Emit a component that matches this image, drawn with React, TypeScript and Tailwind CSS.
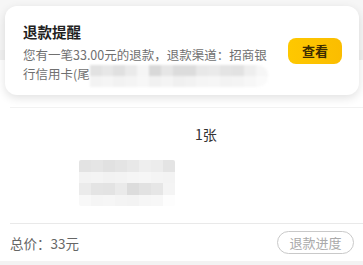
import React from "react";

const blurTop = ["#e2e2e2", "#e7e7e7", "#e0e0e0", "#eaeaea", "#f5f5f5", "#d8d8d8", "#e6e6e6", "#dcdcdc", "#dcdcdc", "#e8e8e8", "#eaeaea", "#e4e4e4", "#e2e2e2", "#eeeeee", "#f6f6f6"];
const blurBot = ["#f3f3f3", "#f5f5f5", "#f2f2f2", "#f4f4f4", "#f7f7f7", "#f1f1f1", "#f4f4f4", "#f0f0f0", "#f2f2f2", "#f5f5f5", "#f6f6f6", "#f3f3f3", "#f4f4f4", "#f7f7f7", "#fafafa"];

const gridRows = [
  ["#e3e3e3", "#e5e5e5", "#e1e1e1", "#e4e4e4", "#e8e8e8", "#eeeeee", "#ececec", "#e4e4e4"],
  ["#f3f3f3", "#f4f4f4", "#f2f2f2", "#f3f3f3", "#f5f5f5", "#f6f6f6", "#f4f4f4", "#f3f3f3"],
  ["#ebebeb", "#e4e4e4", "#e3e3e3", "#eaeaea", "#dcdcdc", "#e2e2e2", "#e6e6e6", "#f4f4f4"],
  ["#f8f8f8", "#f5f5f5", "#f6f6f6", "#f4f4f4", "#f3f3f3", "#f6f6f6", "#f7f7f7", "#fdfdfd"],
];

export default function App() {
  return (
    <div className="relative w-[363px] h-[265px] bg-white overflow-hidden font-['Noto_Sans_CJK_SC','Noto_Sans',sans-serif]">
      {/* underlying page */}
      <div className="flex flex-col h-full">
        <div className="h-[50px] bg-[#f6f6f6]" />
        <div className="h-[10px] bg-[#f1f1f1]" />
        <div className="h-[47px] bg-white" />
        <div className="ml-[10px] border-t border-[#f2f2f2]" />
        <div className="flex flex-col h-[115px]">
          <div className="pl-[195px] pt-[16px] text-[14px] leading-[20px] text-[#333]">1张</div>
          <div className="ml-[79px] mt-[16px] w-[96px] grid grid-cols-8 rounded-[2px] overflow-hidden blur-[0.6px]">
            {gridRows.flat().map((c, i) => (
              <div key={i} className="h-[11.5px]" style={{ backgroundColor: c }} />
            ))}
          </div>
        </div>
        <div className="ml-[10px] border-t border-[#e9e9e9]" />
        <div className="flex items-center justify-between h-[37px] pl-[10px] pr-[9px]">
          <span className="text-[13.5px] text-[#666] leading-[20px]">总价：33元</span>
          <span className="flex items-center justify-center w-[77px] h-[23px] rounded-full border border-[#c9c9c9] text-[13px] text-[#aaa]">退款进度</span>
        </div>
        <div className="flex-1 bg-[#f3f3f3]" />
      </div>

      {/* notification card overlay */}
      <div className="absolute left-[5px] top-[6px] w-[354px] h-[89px] bg-white rounded-[12px] shadow-[0_3px_10px_rgba(0,0,0,0.12)] flex items-center">
        <div className="flex flex-col pl-[18px] self-start pt-[16px] w-[270px]">
          <div className="text-[14.5px] leading-[20px] font-bold text-[#222]">退款提醒</div>
          <div className="mt-[3px] w-[252px] text-[12.5px] leading-[19px] text-[#707070]">
            您有一笔33.00元的退款，退款渠道：招商银行信用卡(尾
            <span className="inline-flex align-top mt-[1px] h-[22px] w-[178px] flex-col rounded-r-[10px] overflow-hidden blur-[0.8px]">
              <span className="flex h-[11px]">
                {blurTop.map((c, i) => (
                  <span key={i} className="flex-1" style={{ backgroundColor: c }} />
                ))}
              </span>
              <span className="flex h-[11px]">
                {blurBot.map((c, i) => (
                  <span key={i} className="flex-1" style={{ backgroundColor: c }} />
                ))}
              </span>
            </span>
          </div>
        </div>
        <div className="ml-auto mr-[17px] flex items-center justify-center w-[54px] h-[26px] rounded-[8px] bg-gradient-to-r from-[#fec800] to-[#fbbd00] text-[13px] font-bold text-[#3d2c00]">
          查看
        </div>
      </div>
    </div>
  );
}
